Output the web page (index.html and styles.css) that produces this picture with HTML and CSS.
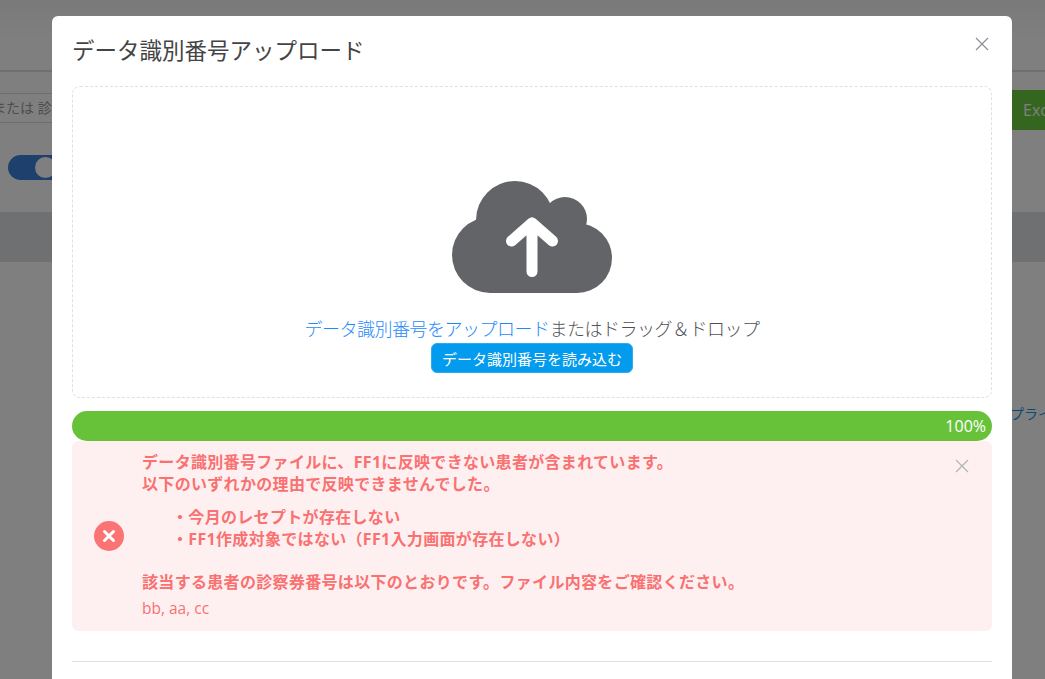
FILE: index.html
```html
<!DOCTYPE html>
<html lang="ja">
<head>
<meta charset="utf-8">
<title>データ識別番号アップロード</title>
<link rel="stylesheet" href="styles.css">
</head>
<body>
<div class="page">
  <div class="page-top"></div>
  <div class="page-filter">
    <div class="page-input">または 診</div>
    <div class="page-excel">Excel</div>
  </div>
  <div class="page-toggle"><span class="page-knob"></span></div>
  <div class="page-thead"></div>
  <div class="page-link">プライ</div>
</div>
<div class="overlay"></div>
<div class="modal">
  <header class="modal-head">
    <h1 class="modal-title">データ識別番号アップロード</h1>
    <button class="close close-modal" aria-label="閉じる">
      <svg width="14" height="14" viewBox="0 0 14 14"><path d="M1 1 13 13M13 1 1 13" class="close-line"/></svg>
    </button>
  </header>
  <section class="drop">
    <svg class="cloud" width="160" height="112" viewBox="0 0 160 112">
      <g class="cloud-body">
        <circle cx="63" cy="39" r="39"/>
        <circle cx="113" cy="38" r="22"/>
        <circle cx="38" cy="74" r="38"/>
        <circle cx="125" cy="77" r="35"/>
        <rect x="38" y="39" width="87" height="73"/>
      </g>
      <path class="cloud-arrow" d="M80 90.500V43M59.500 60 80 42 100.500 60"/>
    </svg>
    <p class="drop-text"><a class="drop-link">データ識別番号をアップロード</a>またはドラッグ＆ドロップ</p>
    <button class="read-btn">データ識別番号を読み込む</button>
  </section>
  <div class="progress"><span class="progress-text">100%</span></div>
  <div class="alert">
    <span class="alert-icon">
      <svg width="30" height="30" viewBox="0 0 30 30"><circle cx="15" cy="15" r="15" class="alert-circle"/><path d="M10.500 10.500 19.500 19.500M19.500 10.500 10.500 19.500" class="alert-x"/></svg>
    </span>
    <div class="alert-body">
      <p class="alert-line">データ識別番号ファイルに、FF1に反映できない患者が含まれています。</p>
      <p class="alert-line">以下のいずれかの理由で反映できませんでした。</p>
      <ul class="alert-list">
        <li class="alert-line">・今月のレセプトが存在しない</li>
        <li class="alert-line">・FF1作成対象ではない（FF1入力画面が存在しない）</li>
      </ul>
      <p class="alert-line">該当する患者の診察券番号は以下のとおりです。ファイル内容をご確認ください。</p>
      <p class="alert-ids">bb, aa, cc</p>
    </div>
    <button class="close close-alert" aria-label="閉じる">
      <svg width="14" height="14" viewBox="0 0 14 14"><path d="M1 1 13 13M13 1 1 13" class="close-line"/></svg>
    </button>
  </div>
  <hr class="divider">
</div>
</body>
</html>
```
FILE: styles.css
```css
* { box-sizing: border-box; }
html, body { margin: 0; height: 100%; overflow: hidden; }
body { font-family: "Open Sans", "Noto Sans CJK JP", sans-serif; background: #fff; }
.page { height: 679px; position: relative; background: #fff; overflow: hidden; }
.page-top { height: 72px; border-bottom: 2px solid #dcdde6; background: linear-gradient(#f4f4f4, #fff 60%); }
.page-filter { display: flex; justify-content: space-between; align-items: flex-start; height: 58px; }
.page-input { width: 200px; height: 30px; margin: 21px 0 0 -8px; border: 1px solid #ddd; border-left: 0; font-size: 14px; line-height: 28px; color: #999; white-space: nowrap; }
.page-excel { width: 80px; height: 40px; margin-top: 18px; background: #6acc3e; color: #fff; font-size: 16px; line-height: 40px; padding-left: 58px; white-space: nowrap; }
.page-toggle { width: 60px; height: 25px; margin: 25px 0 0 8px; background: #3b82d8; border-radius: 13px; padding: 2px 0 0 27px; }
.page-knob { display: block; width: 21px; height: 21px; background: #fff; border-radius: 50%; }
.page-thead { height: 50px; margin-top: 32px; background: #dfe0e3; }
.page-link { position: absolute; left: 1010px; top: 403px; font-size: 14px; color: #1295f0; white-space: nowrap; font-family: "Noto Sans CJK JP", sans-serif; }
.overlay { position: fixed; inset: 0; background: rgba(0,0,0,.5); }
.modal { position: fixed; left: 52px; top: 16px; width: 960px; height: 700px; background: #fff; border-radius: 6px; padding: 0 20px; display: flex; flex-direction: column; font-family: "Noto Sans CJK JP", "Open Sans", sans-serif; }
.modal-head { height: 70px; display: flex; justify-content: space-between; }
.modal-title { margin: 15px 0 0; font-size: 22.500px; line-height: 36px; font-weight: 400; color: #444; }
.close { background: none; border: 0; padding: 0; width: 14px; height: 14px; display: block; line-height: 0; }
.close-line { stroke: #8c8f96; stroke-width: 1.2; fill: none; }
.close-modal { margin: 21px 3px 0 0; }
.drop { height: 312px; border: 1px dashed #dfe0e6; border-radius: 8px; display: flex; flex-direction: column; align-items: center; padding-top: 94px; }
.cloud { display: block; }
.cloud-body { fill: #636467; }
.cloud-arrow { fill: none; stroke: #fff; stroke-width: 11; stroke-linecap: round; stroke-linejoin: round; }
.drop-text { margin: 22px 0 0; font-size: 18px; line-height: 26px; font-weight: 300; color: #4f5155; white-space: nowrap; letter-spacing: -.5px; }
.drop-link { color: #1e8afa; }
.read-btn { margin-top: 2px; width: 202px; height: 30px; background: #039bee; border: 1px solid #2fa9f0; border-radius: 6px; color: #fff; font-family: inherit; font-size: 15px; padding: 0; }
.progress { margin-top: 13px; height: 30px; background: #67c23a; border-radius: 15px; display: flex; justify-content: flex-end; align-items: center; padding-right: 6px; }
.progress-text { font-family: "Open Sans", sans-serif; font-size: 16px; font-weight: 500; color: #fff; }
.alert { height: 190px; background: #fef0f0; border-radius: 6px; display: flex; align-items: center; padding: 0 23px 0 22px; color: #f97171; }
.alert-icon { display: block; width: 30px; height: 30px; line-height: 0; flex: none; }
.alert-circle { fill: #fb7373; }
.alert-x { stroke: #fff; stroke-width: 3; stroke-linecap: round; fill: none; }
.alert-body { flex: 1; margin-left: 18px; align-self: flex-start; padding-top: 10px; }
.alert-line { margin: 0; font-family: "Open Sans", "Noto Sans CJK JP", sans-serif; font-size: 16px; line-height: 22px; font-weight: 700; white-space: nowrap; letter-spacing: .32px; }
.alert-list { list-style: none; margin: 11px 0 21px; padding: 0 0 0 30px; }
.alert-ids { margin: 4px 0 0; font-family: "Open Sans", sans-serif; font-size: 15.500px; line-height: 22px; }
.close-alert { align-self: flex-start; margin-top: 18px; }
.close-alert .close-line { stroke: #b2b4bb; }
.divider { margin: 30px 0 0; width: 100%; border: 0; border-top: 1px solid #dcdfe6; }
```
